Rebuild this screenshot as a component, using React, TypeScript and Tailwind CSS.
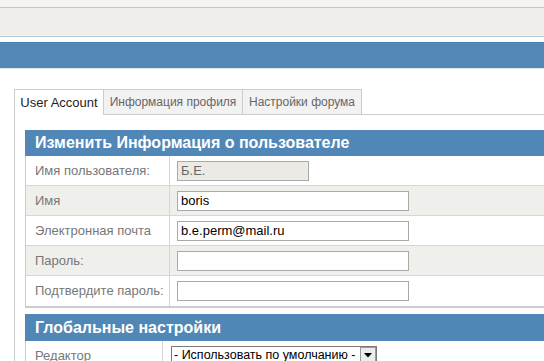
import React from "react";

const rows = [
  { label: "Имя пользователя:", value: "Б.Е.", disabled: true, bg: "bg-white" },
  { label: "Имя", value: "boris", bg: "bg-[#efefec]" },
  { label: "Электронная почта", value: "b.e.perm@mail.ru", bg: "bg-white" },
  { label: "Пароль:", value: "", bg: "bg-[#efefec]" },
  { label: "Подтвердите пароль:", value: "", bg: "bg-white" },
];

function Field({ value, disabled }: { value: string; disabled?: boolean }) {
  return (
    <div
      className={
        disabled
          ? "w-[132px] h-[20px] border border-[#a9a9a9] bg-[#ebeae4] text-[#666] text-[13px] leading-[18px] px-[3px]"
          : "w-[232px] h-[20px] border border-[#a9a9a9] bg-white text-black text-[13px] leading-[18px] px-[3px]"
      }
    >
      {value}
    </div>
  );
}

export default function App() {
  return (
    <div className="w-[544px] h-[361px] overflow-hidden bg-white font-['Liberation_Sans',Arial,sans-serif]">
      <div className="h-[7px] bg-[#f5f4f0]" />
      <div className="h-px bg-[#c6c6c2]" />
      <div className="h-[27px] bg-[#f0eeea]" />
      <div className="h-px bg-[#f6f1ea]" />
      <div className="h-px bg-[#b4cbdb]" />
      <div className="h-[5px] bg-white" />
      <div className="h-[26px] bg-[#5287b6] border-t border-[#4a7eab]" />
      <div className="h-px bg-[#dce6f0]" />

      <div className="pt-[20px] pl-[14px]">
        <div className="flex h-[26px] text-[12px]">
          <div className="w-[90px] border border-b-0 border-[#cccccc] bg-white text-[#222] text-[13px] flex items-center justify-center">
            User Account
          </div>
          <div className="w-[139px] border border-l-0 border-[#cccccc] bg-[#f2f2f2] text-[#666] flex items-center justify-center whitespace-nowrap">
            Информация профиля
          </div>
          <div className="w-[119px] border border-l-0 border-[#cccccc] bg-[#f2f2f2] text-[#666] flex items-center justify-center whitespace-nowrap">
            Настройки форума
          </div>
          <div className="flex-1 border-b border-[#cccccc]" />
        </div>

        <div className="border-l border-[#cccccc] pl-[10px] pt-[15px]">
          <div className="h-[26px] bg-[#5187b6] text-white font-bold text-[16px] leading-[26px] pl-[10px] whitespace-nowrap">
            Изменить Информация о пользователе
          </div>
          <div className="border-l border-[#cccccc] border-b-2 border-b-[#cccccc]">
            {rows.map((r, i) => (
              <div
                key={r.label}
                className={`flex h-[30px] ${r.bg} ${i < rows.length - 1 ? "border-b border-[#d6d6d6]" : ""}`}
              >
                <div className="w-[144px] shrink-0 border-r border-[#d6d6d6] pl-[9px] flex items-center text-[13px] text-[#777] whitespace-nowrap">
                  {r.label}
                </div>
                <div className="pl-[7px] flex items-center">
                  <Field value={r.value} disabled={r.disabled} />
                </div>
              </div>
            ))}
          </div>

          <div className="mt-[6px] h-[27px] bg-[#5187b6] text-white font-bold text-[16px] leading-[27px] pl-[10px] whitespace-nowrap">
            Глобальные настройки
          </div>
          <div className="flex h-[30px] border-l border-[#cccccc]">
            <div className="w-[137px] shrink-0 border-r border-[#d6d6d6] pl-[9px] flex items-center text-[13px] text-[#777]">
              Редактор
            </div>
            <div className="pl-[8px] pt-[5px]">
              <div className="flex h-[18px] w-[206px] border border-[#7a7a7a] bg-white">
                <div className="flex-1 min-w-0 overflow-hidden text-[12.5px] leading-[16px] pl-[2px] text-black whitespace-nowrap">
                  - Использовать по умолчанию -
                </div>
                <div className="w-[16px] h-[16px] shrink-0 border border-[#9a9a9a] bg-[#ececec] flex items-center justify-center">
                  <svg width="8" height="5" viewBox="0 0 8 5">
                    <path d="M0 0 H8 L4 4.5 Z" fill="#000" />
                  </svg>
                </div>
              </div>
            </div>
          </div>
        </div>
      </div>
    </div>
  );
}
